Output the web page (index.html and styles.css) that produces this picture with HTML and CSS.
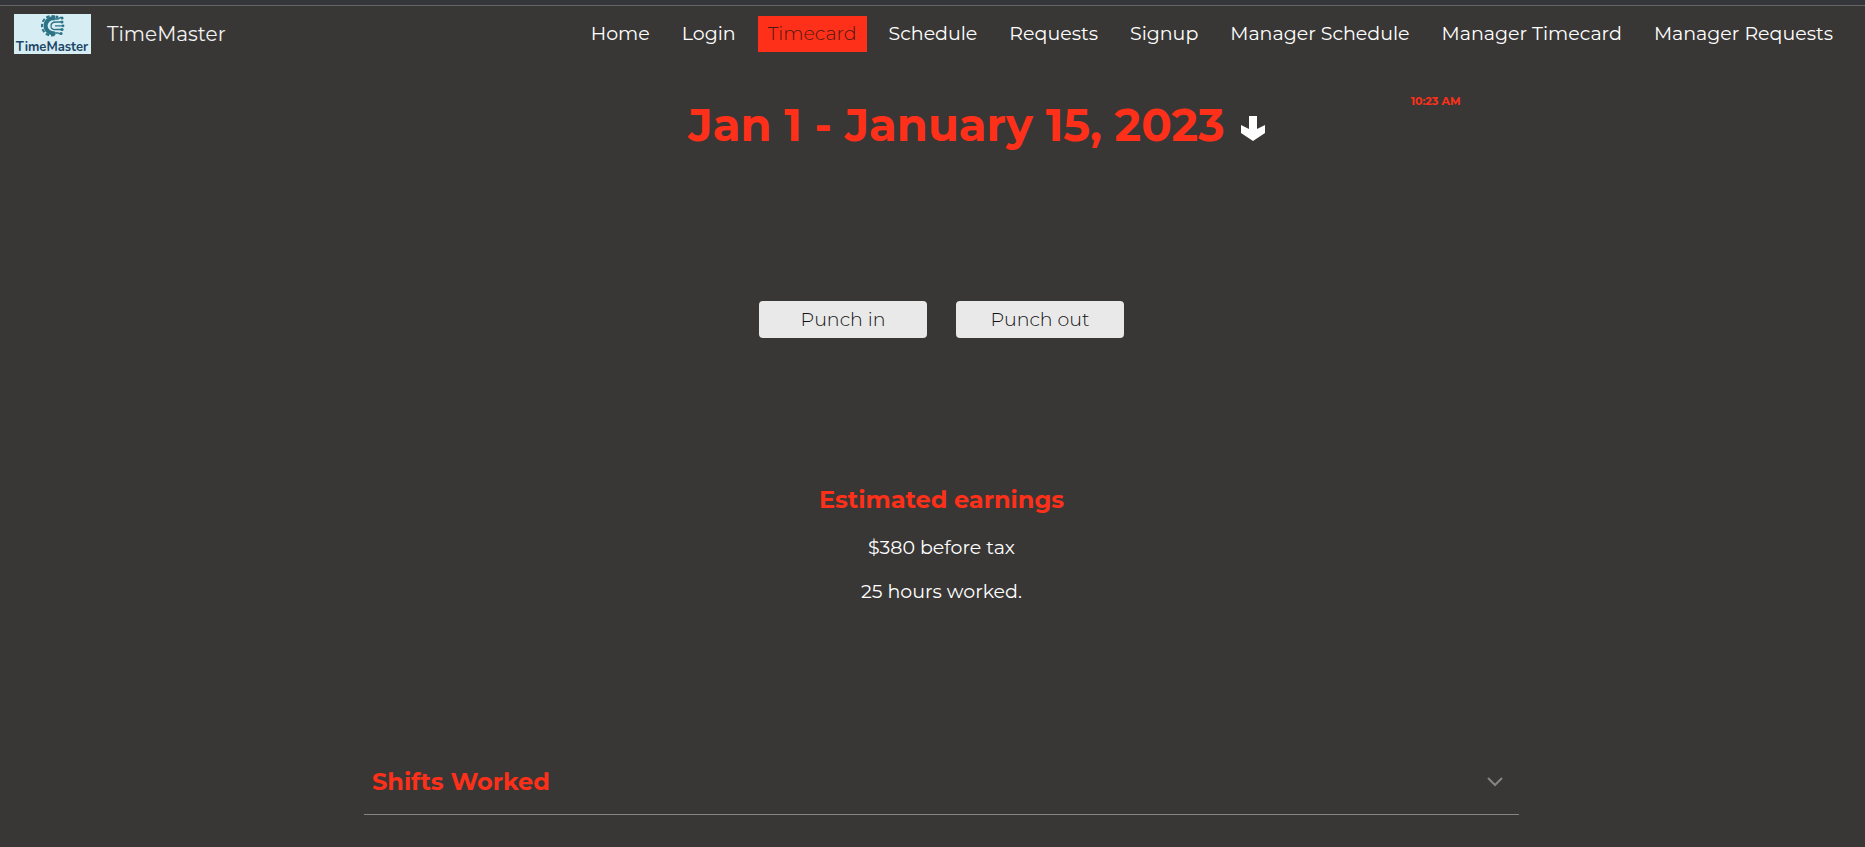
FILE: index.html
```html
<!DOCTYPE html>
<html lang="en">
<head>
<meta charset="utf-8">
<title>TimeMaster - Timecard</title>
<link rel="stylesheet" href="styles.css">
</head>
<body>
<header class="site-header">
  <a class="brand" href="#">
    <svg class="logo" viewBox="0 0 77 40" role="img" aria-label="TimeMaster logo">
      <rect width="77" height="40" fill="#d6edf3"/>
      <g fill="none" stroke="#2d7386">
        <path d="M41 4.500A7.500 7.500 0 1 0 41 19" stroke-width="4"/>
        <path d="M41 2.500A9.800 9.800 0 1 0 41 21" stroke-width="2" stroke-dasharray="3.500 2"/>
        <path d="M48 8H42Q37 8 37 12T42 15.500H48M49 11.800H41M40 5H44L47 3M40 19H44L46 20" stroke-width="1.300"/>
      </g>
      <g fill="#2d7386"><circle cx="43" cy="3" r="1.500"/><circle cx="48" cy="4" r="1.600"/><circle cx="48" cy="8" r="1.500"/><circle cx="49" cy="11.800" r="1.400"/><circle cx="48" cy="15.500" r="1.600"/><circle cx="47" cy="19.500" r="1.600"/></g>
      <text class="logo-text" x="38" y="37" text-anchor="middle">TimeMaster</text>
    </svg>
    <span>TimeMaster</span>
  </a>
  <nav class="nav" aria-label="Main">
    <a href="#">Home</a>
    <a href="#">Login</a>
    <a class="active" href="#" aria-current="page">Timecard</a>
    <a href="#">Schedule</a>
    <a href="#">Requests</a>
    <a href="#">Signup</a>
    <a href="#">Manager Schedule</a>
    <a href="#">Manager Timecard</a>
    <a href="#">Manager Requests</a>
  </nav>
</header>
<main class="page">
  <section class="period">
    <h1>Jan 1 - January 15, 2023</h1>
    <button class="period-toggle" aria-label="Choose pay period">
      <svg viewBox="0 0 24 25"><path d="M8 0H16V13L24 9V17L12 25L0 17V9L8 13Z" fill="#fff"/></svg>
    </button>
    <time class="clock">10:23 AM</time>
  </section>
  <section class="punches">
    <button class="punch">Punch in</button>
    <button class="punch">Punch out</button>
  </section>
  <section class="earnings">
    <h2>Estimated earnings</h2>
    <p>$380 before tax</p>
    <p>25 hours worked.</p>
  </section>
  <section class="shifts">
    <h2>Shifts Worked</h2>
    <button class="expand" aria-label="Show shifts worked">
      <svg viewBox="0 0 16 10"><path d="M1 1L8 8L15 1" fill="none" stroke="#858585" stroke-width="2"/></svg>
    </button>
  </section>
</main>
</body>
</html>
```
FILE: styles.css
```css
* { box-sizing: border-box; }
body {
  margin: 0;
  min-height: 100vh;
  overflow-x: hidden;
  border-top: 5px solid #35363a;
  background: #393735;
  color: #fff;
  font-family: Montserrat, Inter, "Open Sans", sans-serif;
  font-size: 19px;
}
h1, h2, p { margin: 0; }
h1, h2 { color: #fe3019; font-weight: 700; }
button { border: 0; padding: 0; background: none; font: inherit; cursor: pointer; }
svg { display: block; }
.site-header {
  display: flex;
  align-items: center;
  justify-content: space-between;
  height: 56px;
  padding: 0 22px 0 14px;
  border-top: 1px solid #656565;
}
.brand {
  display: flex;
  align-items: center;
  gap: 16px;
  color: #f1f1f1;
  font-size: 20px;
  text-decoration: none;
}
.logo { width: 77px; height: 40px; }
.logo-text { fill: #1c4567; font-family: Nunito, Lato, sans-serif; font-size: 13px; font-weight: 700; }
.nav { display: flex; gap: 12px; }
.nav a {
  padding: 0 10px;
  color: #fff;
  line-height: 36px;
  white-space: nowrap;
  text-decoration: none;
}
.nav .active { background: #fe3019; color: #4a1a14; font-weight: 300; }
.page { padding-left: 18px; }
.period {
  display: grid;
  grid-template-columns: 1fr auto 24px 1fr;
  column-gap: 16px;
  align-items: center;
  margin: 34px 0 0 70px;
}
.period h1 { grid-column: 2; font-size: 45px; line-height: 60px; }
.period-toggle { padding-top: 6px; }
.period-toggle svg { width: 24px; height: 25px; }
.clock {
  align-self: start;
  padding-left: 130px;
  color: #fe3019;
  font-size: 11px;
  font-weight: 700;
  line-height: 12px;
}
.punches { display: flex; justify-content: center; gap: 29px; margin-top: 146px; }
.punch {
  width: 168px;
  height: 37px;
  border-radius: 4px;
  background: #e9e9e9;
  color: #111;
  font-weight: 300;
}
.earnings { margin-top: 146px; text-align: center; }
.earnings h2 { font-size: 24px; line-height: 32px; }
.earnings p { margin-top: 20px; line-height: 24px; }
.shifts {
  display: flex;
  align-items: center;
  justify-content: space-between;
  width: 63%;
  max-width: 1155px;
  height: 66px;
  margin: 145px auto 0;
  padding: 0 16px 0 8px;
  border-bottom: 1px solid #858585;
}
.shifts h2 { font-size: 24px; line-height: 32px; }
.expand svg { width: 16px; height: 10px; }
```
